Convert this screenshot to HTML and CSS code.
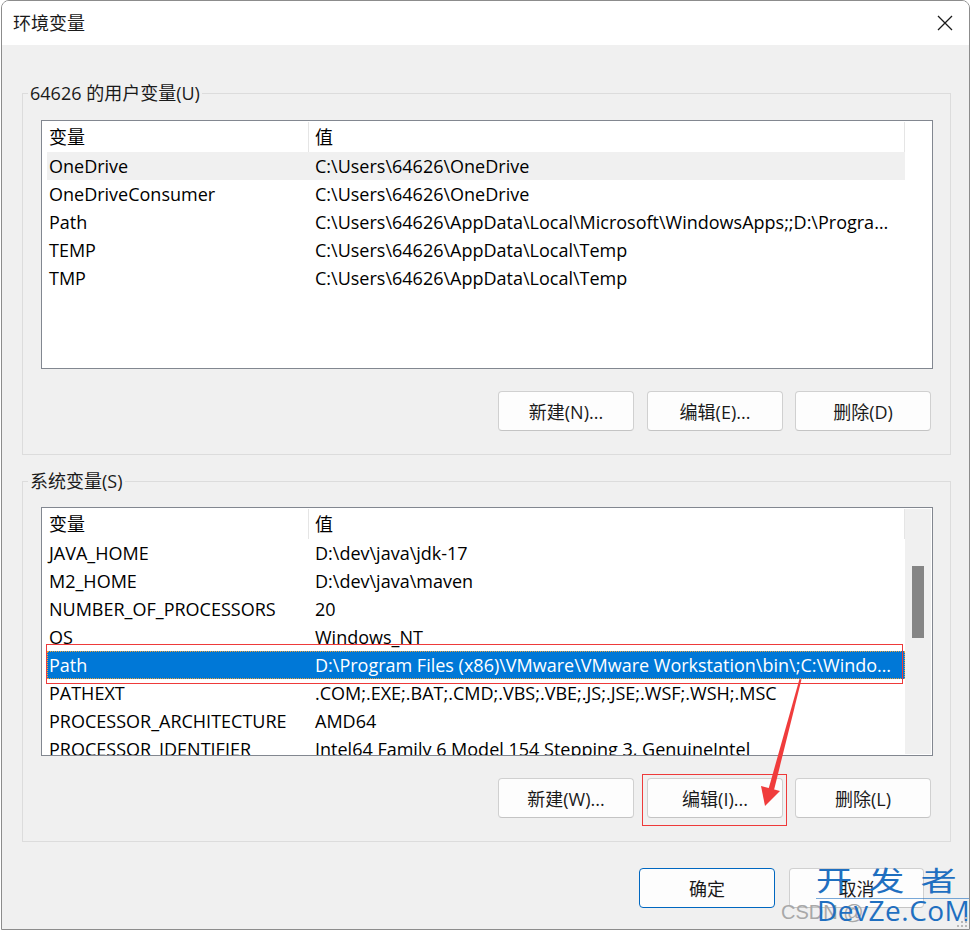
FILE: index.html
```html
<!doctype html>
<html lang="zh-CN">
<head>
    <meta charset="UTF-8">
    <title>环境变量</title>
    <link rel="stylesheet" href="styles.css">
</head>
<body>
<div class="window">
    <div class="titlebar">
        <span class="title">环境变量</span>
        <svg class="close" width="16" height="16" viewBox="0 0 16 16">
            <path d="M1 1L15 15M15 1L1 15" stroke="#1a1a1a" stroke-width="1.3" fill="none"/>
        </svg>
    </div>

    <div class="content">
        <fieldset class="group group-user">
            <legend>64626 的用户变量(U)</legend>
            <div class="list">
                <div class="list-body">
                    <div class="row head"><span class="c1">变量</span><span class="c2">值</span></div>
                    <div class="row hover"><span class="c1">OneDrive</span><span class="c2">C:\Users\64626\OneDrive</span></div>
                    <div class="row"><span class="c1">OneDriveConsumer</span><span class="c2">C:\Users\64626\OneDrive</span></div>
                    <div class="row"><span class="c1">Path</span><span class="c2">C:\Users\64626\AppData\Local\Microsoft\WindowsApps;;D:\Program Files\Git\cmd</span></div>
                    <div class="row"><span class="c1">TEMP</span><span class="c2">C:\Users\64626\AppData\Local\Temp</span></div>
                    <div class="row"><span class="c1">TMP</span><span class="c2">C:\Users\64626\AppData\Local\Temp</span></div>
                </div>
                <div class="gutter"></div>
            </div>
            <div class="buttons">
                <button class="btn">新建(N)...</button>
                <button class="btn">编辑(E)...</button>
                <button class="btn">删除(D)</button>
            </div>
        </fieldset>

        <fieldset class="group group-system">
            <legend>系统变量(S)</legend>
            <div class="list">
                <div class="list-body">
                    <div class="row head"><span class="c1">变量</span><span class="c2">值</span></div>
                    <div class="row"><span class="c1">JAVA_HOME</span><span class="c2">D:\dev\java\jdk-17</span></div>
                    <div class="row"><span class="c1">M2_HOME</span><span class="c2">D:\dev\java\maven</span></div>
                    <div class="row"><span class="c1">NUMBER_OF_PROCESSORS</span><span class="c2">20</span></div>
                    <div class="row"><span class="c1">OS</span><span class="c2">Windows_NT</span></div>
                    <div class="row selected"><span class="c1">Path</span><span class="c2">D:\Program Files (x86)\VMware\VMware Workstation\bin\;C:\Windows\system32;C:\Windows</span></div>
                    <div class="row"><span class="c1">PATHEXT</span><span class="c2">.COM;.EXE;.BAT;.CMD;.VBS;.VBE;.JS;.JSE;.WSF;.WSH;.MSC</span></div>
                    <div class="row"><span class="c1">PROCESSOR_ARCHITECTURE</span><span class="c2">AMD64</span></div>
                    <div class="row"><span class="c1">PROCESSOR_IDENTIFIER</span><span class="c2">Intel64 Family 6 Model 154 Stepping 3, GenuineIntel</span></div>
                </div>
                <div class="gutter">
                    <div class="scrollbar"><div class="thumb"></div></div>
                </div>
            </div>
            <div class="buttons">
                <button class="btn">新建(W)...</button>
                <button class="btn">编辑(I)...</button>
                <button class="btn">删除(L)</button>
            </div>
        </fieldset>

        <div class="footer">
            <button class="btn default">确定</button>
            <button class="btn">取消</button>
        </div>
    </div>

    <!-- 标注 -->
    <div class="mark mark-row"></div>
    <div class="mark mark-btn"></div>
    <svg class="arrow" width="972" height="932" viewBox="0 0 972 932">
        <polygon points="799.5,679 801.5,679.5 774,790 768.5,789" fill="#f03c3c"/>
        <polygon points="761,786 780,791 765,806" fill="#f03c3c"/>
    </svg>

    <!-- 水印 -->
    <div class="watermark">
        <div class="wm-csdn">CSDN @</div>
        <div class="wm-cn">开发者</div>
        <div class="wm-en">DevZe.CoM</div>
    </div>
    <svg class="grip" width="12" height="12" viewBox="0 0 12 12">
        <rect x="9" y="1" width="2" height="2" fill="#b8b8b8"/>
        <rect x="5" y="5" width="2" height="2" fill="#b8b8b8"/>
        <rect x="9" y="5" width="2" height="2" fill="#b8b8b8"/>
        <rect x="1" y="9" width="2" height="2" fill="#b8b8b8"/>
        <rect x="5" y="9" width="2" height="2" fill="#b8b8b8"/>
        <rect x="9" y="9" width="2" height="2" fill="#b8b8b8"/>
    </svg>
</div>
</body>
</html>
```

FILE: styles.css
```css
*{
    margin: 0;
    padding: 0;
    box-sizing: border-box;
}
body{
    background: #fff;
    font-family: "Open Sans", "Noto Sans CJK SC", sans-serif;
    font-size: 18px;
    color: #000;
}
.window{
    position: relative;
    width: 969px;
    height: 930px;
    margin-left: 1px;
    border: 1px solid #8c8c8c;
    border-radius: 8px 8px 0 0;
    overflow: hidden;
    display: flex;
    flex-direction: column;
}
.titlebar{
    height: 44px;
    background: #fff;
    display: flex;
    align-items: center;
    justify-content: space-between;
    padding: 0 16px 0 11px;
    flex-shrink: 0;
}
.title{
    line-height: 44px;
    color: #1a1a1a;
}
.close{
    display: block;
}
.content{
    flex: 1;
    background: #f0f0f0;
    display: flex;
    flex-direction: column;
    padding: 35px 18px 0 20px;
}
.group{
    border: 1px solid #dcdcdc;
    padding: 14px 17px 23px 18px;
    min-width: 0;
}
.group-system{
    margin-top: 13px;
    padding-top: 13px;
}
.group legend{
    margin-left: -13px;
    padding: 0 2px;
    line-height: 26px;
    height: 26px;
    color: #1a1a1a;
}
.list{
    height: 249px;
    border: 1px solid #828790;
    background: #fff;
    display: flex;
    overflow: hidden;
}
.list-body{
    width: 863px;
    padding-left: 5px;
    overflow: hidden;
}
.gutter{
    flex: 1;
}
.scrollbar{
    height: 245px;
    margin: 1px 1px 1px 0;
    background: #f0f0f0;
    padding-top: 57px;
}
.thumb{
    width: 12px;
    height: 72px;
    margin: 0 auto;
    background: #858585;
}
.row{
    display: flex;
    height: 28px;
    line-height: 28px;
    white-space: nowrap;
}
.row.head{
    height: 31px;
}
.row.head span{
    margin-top: 1px;
    height: 30px;
    line-height: 30px;
    border-right: 1px solid #e5e5e5;
}
.c1{
    width: 262px;
    flex-shrink: 0;
    padding-left: 2px;
    overflow: hidden;
}
.c2{
    flex: 1;
    padding: 0 5px 0 6px;
    overflow: hidden;
    text-overflow: ellipsis;
}
.row.hover{
    background: #f0f0f0;
}
.row.selected{
    background: #0078d7;
    color: #fff;
    outline: 1px dotted #f2a33a;
    outline-offset: -1px;
}
.buttons{
    display: flex;
    justify-content: flex-end;
    gap: 13px;
    margin-top: 22px;
    padding-right: 2px;
}
.btn{
    width: 136px;
    height: 40px;
    font-family: inherit;
    font-size: 18px;
    color: #1a1a1a;
    background: #fdfdfd;
    border: 1px solid #d0d0d0;
    border-bottom-color: #c4c4c4;
    border-radius: 4px;
}
.buttons .btn:last-child{
    margin-left: -1px;
}
.footer{
    display: flex;
    justify-content: flex-end;
    gap: 14px;
    margin-top: 26px;
    padding-right: 27px;
}
.footer .btn:last-child{
    width: 135px;
}
.btn.default{
    border: 1px solid #0067c0;
}
.mark{
    position: absolute;
    border: 1px solid #ee3a3a;
}
.mark-row{
    left: 44px;
    top: 643px;
    width: 857px;
    height: 40px;
}
.mark-btn{
    left: 640px;
    top: 773px;
    width: 145px;
    height: 52px;
}
.arrow{
    position: absolute;
    left: -2px;
    top: -1px;
    pointer-events: none;
}
.watermark{
    position: absolute;
    left: 776px;
    top: 863px;
    width: 190px;
    pointer-events: none;
}
.wm-cn{
    position: relative;
    margin-left: 38px;
    width: 146px;
    font-size: 27px;
    line-height: 34px;
    letter-spacing: 12px;
    color: #1f6fc0;
    transform: scaleX(1.34);
    transform-origin: left center;
    border-bottom: 1px solid rgba(31, 111, 192, 0.6);
}
.wm-en{
    position: absolute;
    left: 39px;
    top: 29px;
    font-size: 28px;
    line-height: 34px;
    color: #1f6fc0;
    letter-spacing: 0.5px;
}
.wm-csdn{
    position: absolute;
    left: 3px;
    top: 36px;
    font-family: "Liberation Sans", sans-serif;
    font-size: 20px;
    line-height: 24px;
    color: #a8a8a8;
}
.grip{
    position: absolute;
    right: 1px;
    bottom: 1px;
}
```
